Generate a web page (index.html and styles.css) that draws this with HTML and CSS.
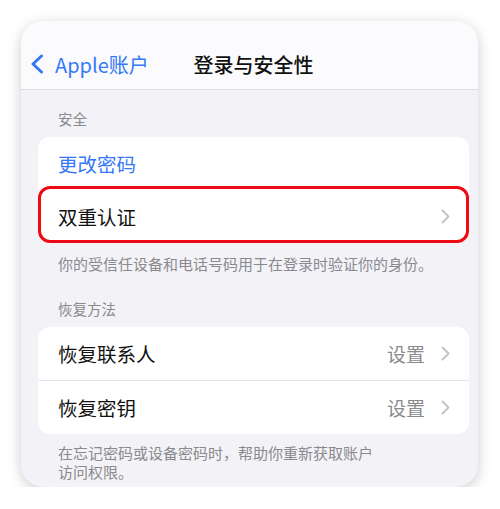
FILE: index.html
```html
<!DOCTYPE html>
<html lang="zh-CN">
<head>
    <meta charset="UTF-8">
    <meta name="viewport" content="width=device-width, initial-scale=1.0">
    <title>登录与安全性</title>
    <link rel="stylesheet" href="styles.css">
</head>
<body>

<div class="phone">
    <div class="nav-bar">
        <div class="nav-back">
            <svg class="back-icon" width="14" height="20" viewBox="0 0 14 20">
                <path d="M11.5 2 L3 10 L11.5 18" fill="none" stroke="#3478f6" stroke-width="3" stroke-linecap="round" stroke-linejoin="round"/>
            </svg>
            <span>Apple账户</span>
        </div>
        <div class="nav-title">登录与安全性</div>
        <div></div>
    </div>

    <div class="content">
        <div class="section-label">安全</div>
        <div class="group">
            <div class="row">
                <span class="row-text link">更改密码</span>
            </div>
            <div class="row highlighted">
                <span class="row-text">双重认证</span>
                <svg class="chevron" width="9" height="15" viewBox="0 0 9 15">
                    <path d="M1.5 1.5 L7.5 7.5 L1.5 13.5" fill="none" stroke="#c4c4c8" stroke-width="2" stroke-linecap="round" stroke-linejoin="round"/>
                </svg>
                <div class="mark"></div>
            </div>
        </div>
        <div class="section-note">你的受信任设备和电话号码用于在登录时验证你的身份。</div>

        <div class="section-label second">恢复方法</div>
        <div class="group">
            <div class="row divided">
                <span class="row-text">恢复联系人</span>
                <span class="row-value">设置</span>
                <svg class="chevron" width="9" height="15" viewBox="0 0 9 15">
                    <path d="M1.5 1.5 L7.5 7.5 L1.5 13.5" fill="none" stroke="#c4c4c8" stroke-width="2" stroke-linecap="round" stroke-linejoin="round"/>
                </svg>
            </div>
            <div class="row">
                <span class="row-text">恢复密钥</span>
                <span class="row-value">设置</span>
                <svg class="chevron" width="9" height="15" viewBox="0 0 9 15">
                    <path d="M1.5 1.5 L7.5 7.5 L1.5 13.5" fill="none" stroke="#c4c4c8" stroke-width="2" stroke-linecap="round" stroke-linejoin="round"/>
                </svg>
            </div>
        </div>
        <div class="section-note tight">在忘记密码或设备密码时，帮助你重新获取账户<br>访问权限。</div>
    </div>
</div>

</body>
</html>
```

FILE: styles.css
```css
body {
    margin: 0;
    padding: 21px 0 0 21px;
    background-color: #ffffff;
    font-family: "Noto Sans CJK SC", "Noto Sans", sans-serif;
}
.phone {
    width: 457px;
    height: 466px;
    border-radius: 22px;
    overflow: hidden;
    background-color: #f2f2f7;
    box-shadow: 0 3px 14px rgba(0, 0, 0, 0.2);
}
.nav-bar {
    display: grid;
    grid-template-columns: 1fr auto 1fr;
    align-items: center;
    height: 50px;
    padding-top: 18px;
    background-color: #fbfbfd;
    border-bottom: 1px solid #dedee2;
}
.nav-back {
    display: flex;
    align-items: center;
    gap: 11px;
    padding-left: 9px;
    color: #3478f6;
    font-size: 20px;
    white-space: nowrap;
}
.back-icon {
    display: block;
}
.nav-title {
    padding-left: 8px;
    font-size: 20px;
    font-weight: 500;
    color: #111111;
}
.content {
    padding: 20px 9px 0 17px;
}
.section-label {
    padding-left: 20px;
    font-size: 14.5px;
    line-height: 18px;
    color: #8a8a8e;
}
.section-label.second {
    margin-top: 27px;
}
.group {
    margin-top: 9px;
    background-color: #ffffff;
    border-radius: 12px;
}
.row {
    display: flex;
    align-items: center;
    height: 53px;
    padding: 0 19px 0 20px;
    position: relative;
}
.row.divided {
    border-bottom: 1px solid #e6e6ea;
}
.row-text {
    flex: 1;
    font-size: 19.5px;
    color: #111111;
}
.row-text.link {
    color: #3478f6;
}
.row-value {
    margin-right: 16px;
    font-size: 19px;
    color: #8a8a8e;
}
.chevron {
    display: block;
}
.mark {
    position: absolute;
    top: -4px;
    left: 0;
    right: 0;
    bottom: 0;
    border: 3px solid #ee0a14;
    border-radius: 12px;
}
.section-note {
    margin-top: 11px;
    padding-left: 20px;
    font-size: 15px;
    line-height: 19px;
    color: #8a8a8e;
}
.section-note.tight {
    margin-top: 9px;
}
```
